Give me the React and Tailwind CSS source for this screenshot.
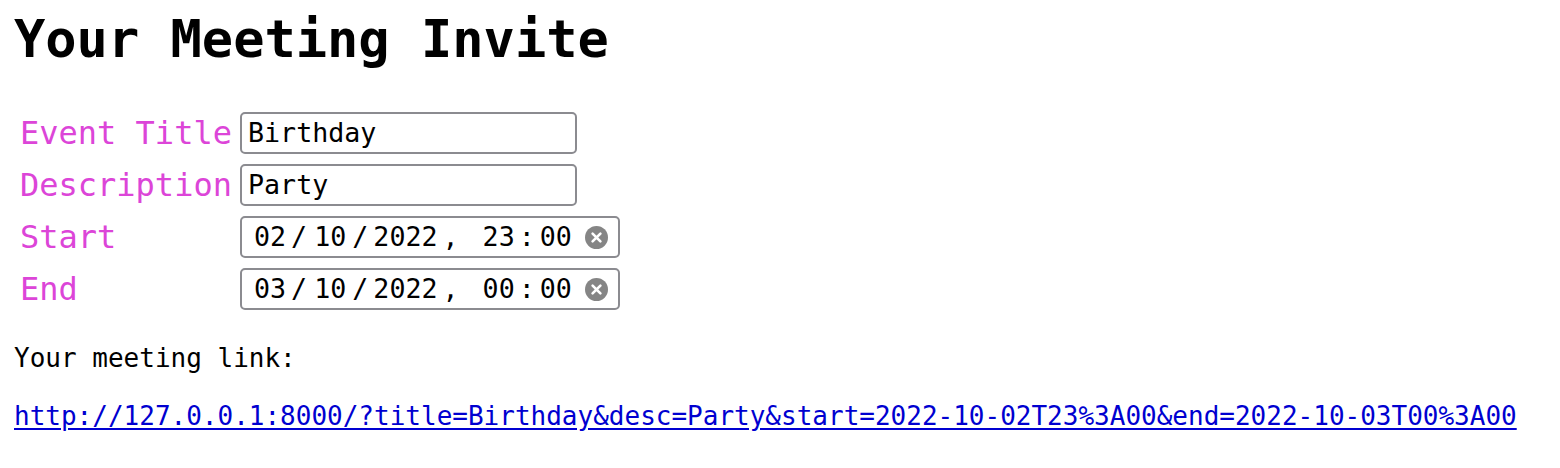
import React from "react";

const mono = "font-['DejaVu_Sans_Mono',monospace]";

function ClearIcon() {
  return (
    <svg width="23" height="23" viewBox="0 0 23 23" className="shrink-0">
      <circle cx="11.5" cy="11.5" r="11.5" fill="#858585" />
      <path d="M7.6 7.6 L15.4 15.4 M15.4 7.6 L7.6 15.4" stroke="#fff" strokeWidth="2.6" strokeLinecap="round" />
    </svg>
  );
}

function DateField({ d, m, y, hh, mm }) {
  return (
    <div className="flex items-center h-[42px] w-[380px] border-2 border-[#8b8b90] rounded-[5px] bg-white text-[26.67px] leading-[42px] text-black">
      <span className="ml-[12px]">{d}</span>
      <span className="ml-[5px]">/</span>
      <span className="ml-[7px]">{m}</span>
      <span className="ml-[6px]">/</span>
      <span className="ml-[5px]">{y}</span>
      <span className="ml-[5px]">,</span>
      <span className="ml-[24px]">{hh}</span>
      <span className="ml-[4px]">:</span>
      <span className="ml-[5px]">{mm}</span>
      <span className="ml-[13px] flex items-center">
        <ClearIcon />
      </span>
    </div>
  );
}

function Row({ label, children }) {
  return (
    <div className="flex items-center h-[42px]">
      <div className="w-[220px] text-[32px] leading-[42px] text-[#dc45d8] whitespace-nowrap">{label}</div>
      {children}
    </div>
  );
}

export default function App() {
  const url =
    "http://127.0.0.1:8000/?title=Birthday&desc=Party&start=2022-10-02T23%3A00&end=2022-10-03T00%3A00";
  return (
    <div className={`${mono} bg-white w-[1560px] h-[468px] text-black pl-[14px] pt-[9px]`}>
      <h1 className="text-[52px] font-bold leading-[60px] m-0">Your Meeting Invite</h1>
      <div className="mt-[43px] ml-[6px] flex flex-col gap-[10px]">
        <Row label="Event Title">
          <div className="h-[42px] w-[337px] border-2 border-[#8b8b90] rounded-[5px] bg-white text-[26.67px] leading-[38px] pl-[6px]">
            Birthday
          </div>
        </Row>
        <Row label="Description">
          <div className="h-[42px] w-[337px] border-2 border-[#8b8b90] rounded-[5px] bg-white text-[26.67px] leading-[38px] pl-[6px]">
            Party
          </div>
        </Row>
        <Row label="Start">
          <DateField d="02" m="10" y="2022" hh="23" mm="00" />
        </Row>
        <Row label="End">
          <DateField d="03" m="10" y="2022" hh="00" mm="00" />
        </Row>
      </div>
      <p className="mt-[33px] text-[26px] leading-[30px]">Your meeting link:</p>
      <p className="mt-[28px] text-[26px] leading-[30px]">
        <a href="#" className="text-[#0000d0] underline underline-offset-[3px]">
          {url}
        </a>
      </p>
    </div>
  );
}
